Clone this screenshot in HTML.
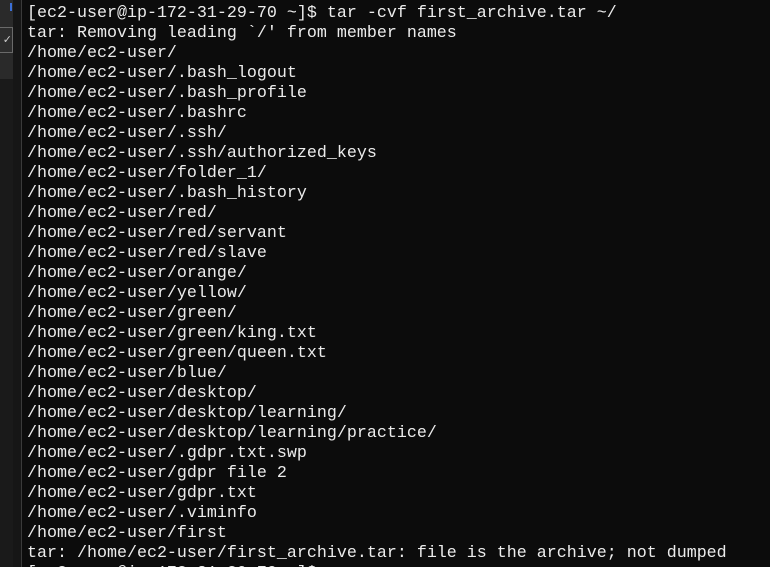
<!DOCTYPE html>
<html><head><meta charset="utf-8"><style>
html,body{margin:0;padding:0;background:#0c0c0c;width:770px;height:567px;overflow:hidden;position:relative}
.side{position:absolute;left:0;top:0;width:13px;height:567px;background:#1a1a1a}
.s1{position:absolute;left:0;top:0;width:13px;height:27px;background:#2a2a2a}
.s1b{position:absolute;left:10px;top:3px;width:2px;height:8px;background:#3b6fd6}
.s2{position:absolute;left:-1px;top:27px;width:12px;height:24px;border:1px solid #6a6a6a;background:#2d2d2d;color:#ccc;font:11px sans-serif;line-height:24px;text-align:right}
.s3{position:absolute;left:0;top:53px;width:13px;height:26px;background:#2a2a2a}
.gap{position:absolute;left:13px;top:0;width:8px;height:567px;background:#161616}
.line{position:absolute;left:21px;top:0;width:1px;height:567px;background:#3a3a3a}
pre{position:absolute;left:27px;top:4px;margin:0;font-family:"Liberation Mono",monospace;font-size:16.67px;line-height:20px;color:#ececec;white-space:pre}
</style></head><body>
<div class="side"></div><div class="s1"></div><div class="s1b"></div><div class="s2">✓</div><div class="s3"></div>
<div class="gap"></div><div class="line"></div>
<pre>[ec2-user@ip-172-31-29-70 ~]$ tar -cvf first_archive.tar ~/
tar: Removing leading `/' from member names
/home/ec2-user/
/home/ec2-user/.bash_logout
/home/ec2-user/.bash_profile
/home/ec2-user/.bashrc
/home/ec2-user/.ssh/
/home/ec2-user/.ssh/authorized_keys
/home/ec2-user/folder_1/
/home/ec2-user/.bash_history
/home/ec2-user/red/
/home/ec2-user/red/servant
/home/ec2-user/red/slave
/home/ec2-user/orange/
/home/ec2-user/yellow/
/home/ec2-user/green/
/home/ec2-user/green/king.txt
/home/ec2-user/green/queen.txt
/home/ec2-user/blue/
/home/ec2-user/desktop/
/home/ec2-user/desktop/learning/
/home/ec2-user/desktop/learning/practice/
/home/ec2-user/.gdpr.txt.swp
/home/ec2-user/gdpr file 2
/home/ec2-user/gdpr.txt
/home/ec2-user/.viminfo
/home/ec2-user/first
tar: /home/ec2-user/first_archive.tar: file is the archive; not dumped
[ec2-user@ip-172-31-29-70 ~]$ </pre>
</body></html>
